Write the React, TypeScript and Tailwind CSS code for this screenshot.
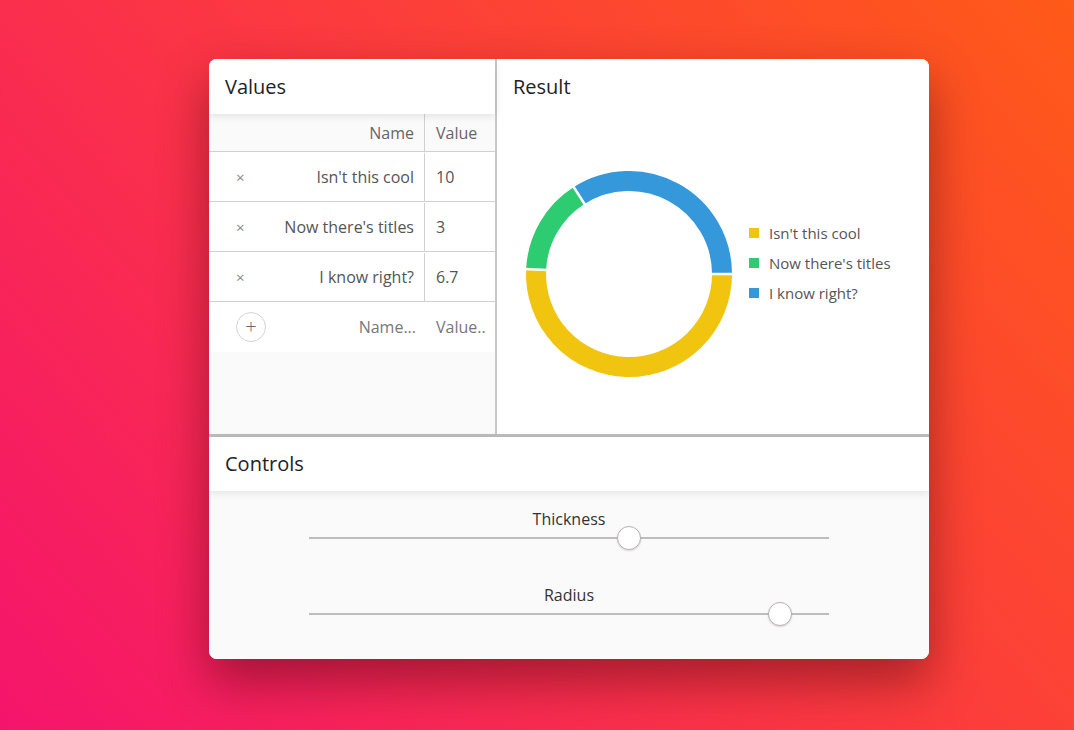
import React from "react";

type Item = { name: string; value: number; color: string };

const items: Item[] = [
  { name: "Isn't this cool", value: 10, color: "#f1c40f" },
  { name: "Now there's titles", value: 3, color: "#2ecc71" },
  { name: "I know right?", value: 6.7, color: "#3498db" },
];

function polar(cx: number, cy: number, r: number, deg: number) {
  const a = (deg * Math.PI) / 180;
  return [cx + r * Math.cos(a), cy + r * Math.sin(a)];
}

function Donut() {
  const size = 208;
  const c = size / 2;
  const r = 93;
  const thick = 20;
  const total = items.reduce((s, i) => s + i.value, 0);
  let start = 0;
  const arcs = items.map((it) => {
    const sweep = (it.value / total) * 360;
    const end = start + sweep;
    const [x1, y1] = polar(c, c, r, start);
    const [x2, y2] = polar(c, c, r, end);
    const large = sweep > 180 ? 1 : 0;
    const d = `M ${x1} ${y1} A ${r} ${r} 0 ${large} 1 ${x2} ${y2}`;
    const seg = { d, color: it.color, start };
    start = end;
    return seg;
  });
  return (
    <svg width={size} height={size} viewBox={`0 0 ${size} ${size}`}>
      {arcs.map((a, i) => (
        <path key={i} d={a.d} fill="none" stroke={a.color} strokeWidth={thick} />
      ))}
      {arcs.map((a, i) => {
        const [xa, ya] = polar(c, c, r - thick / 2 - 1, a.start);
        const [xb, yb] = polar(c, c, r + thick / 2 + 1, a.start);
        return <line key={"g" + i} x1={xa} y1={ya} x2={xb} y2={yb} stroke="#fff" strokeWidth={2.5} />;
      })}
    </svg>
  );
}

function Slider({ label, pct }: { label: string; pct: number }) {
  return (
    <div className="flex flex-col items-center">
      <div className="h-6 text-base leading-6 text-[#333]">{label}</div>
      <div className="relative h-[14px] w-[520px]">
        <div className="absolute left-0 right-0 top-[6px] h-[2px] bg-[#bdbdbd]" />
        <div
          className="absolute top-[-5px] h-6 w-6 -translate-x-1/2 rounded-full border border-[#b8b0b0] bg-white shadow-[0_1px_2px_rgba(0,0,0,0.15)]"
          style={{ left: `${pct}%` }}
        />
      </div>
    </div>
  );
}

export default function App() {
  return (
    <div
      className="flex min-h-[730px] w-full justify-start bg-[linear-gradient(50deg,#f5146c_0%,#fb3446_45%,#ff5a18_100%)] pl-[209px] pt-[59px]"
      style={{ fontFamily: '"Open Sans", "Noto Sans", sans-serif' }}
    >
      <div className="flex h-[600px] w-[720px] flex-col overflow-hidden rounded-lg bg-white shadow-[0_22px_50px_rgba(60,0,10,0.45)]">
        {/* upper panels */}
        <div className="flex h-[378px] border-b-[3px] border-[#bdbdbd]">
          {/* values table */}
          <div className="flex w-[288px] flex-col border-r-2 border-[#c8c8c8] bg-[#fafafa]">
            <div className="relative z-10 flex h-[55px] items-center bg-white px-4 text-xl text-[#222] shadow-[0_2px_8px_rgba(0,0,0,0.1)]">
              Values
            </div>
            <div className="flex h-[38px] border-b border-[#d0d0d0] text-base text-[#666]">
              <div className="flex w-[216px] items-center justify-end border-r border-[#d0d0d0] pr-[10px]">Name</div>
              <div className="flex flex-1 items-center pl-[11px]">Value</div>
            </div>
            {items.map((it) => (
              <div key={it.name} className="flex h-[50px] border-b border-[#d0d0d0] bg-white pt-px text-base text-[#555]">
                <div className="flex w-[216px] items-center border-r border-[#d0d0d0] pr-[10px]">
                  <span className="w-[64px] pl-[27px] text-[15px] text-[#888]">×</span>
                  <span className="flex-1 text-right">{it.name}</span>
                </div>
                <div className="flex flex-1 items-center pl-[11px]">{it.value}</div>
              </div>
            ))}
            <div className="flex h-[50px] bg-white text-base text-[#777]">
              <div className="flex w-[217px] items-center pr-[10px]">
                <span className="ml-[27px] flex h-[30px] w-[30px] items-center justify-center rounded-full border border-[#d4d4d4] text-xl font-light leading-none text-[#666]">
                  +
                </span>
                <span className="flex-1 text-right">Name...</span>
              </div>
              <div className="flex flex-1 items-center overflow-hidden whitespace-nowrap pl-[10px]">Value..</div>
            </div>
          </div>
          {/* result chart */}
          <div className="flex flex-1 flex-col bg-white">
            <div className="flex h-[55px] items-center px-4 text-xl text-[#222]">Result</div>
            <div className="flex flex-1 items-center pl-[28px]">
              <Donut />
              <div className="mb-[22px] ml-[16px] flex flex-col gap-[10px] text-[15px] text-[#555]">
                {items.map((it) => (
                  <div key={it.name} className="flex h-5 items-center">
                    <span className="mr-[10px] h-[10px] w-[10px]" style={{ background: it.color }} />
                    {it.name}
                  </div>
                ))}
              </div>
            </div>
          </div>
        </div>
        {/* controls */}
        <div className="relative z-10 flex h-[54px] items-center bg-white px-4 text-xl text-[#222] shadow-[0_2px_8px_rgba(0,0,0,0.1)]">
          Controls
        </div>
        <div className="flex flex-1 flex-col items-center gap-[38px] bg-[#fafafa] pt-4">
          <Slider label="Thickness" pct={61.5} />
          <Slider label="Radius" pct={90.6} />
        </div>
      </div>
    </div>
  );
}
